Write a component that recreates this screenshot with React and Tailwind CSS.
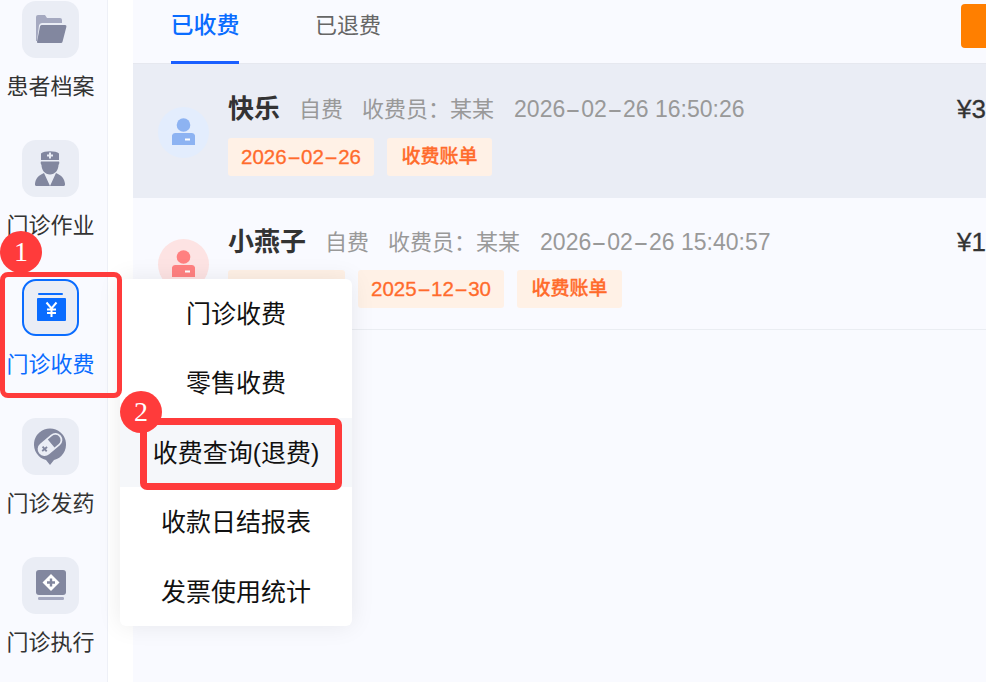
const Box = ({ active, children }) => (
  <div className={active ? "w-[57px] h-[57px] rounded-[14px] bg-[#eaedf5] border-2 border-[#0a6cff] flex items-center justify-center" : "w-[57px] h-[57px] rounded-[14px] bg-[#eaedf5] flex items-center justify-center"}>
    {children}
  </div>
);

const FolderIcon = () => (
  <svg width="57" height="57" viewBox="0 0 57 57">
    <path d="M14 16a2 2 0 0 1 2-2h7l2 3h13a2 2 0 0 1 2 2v3H20a3 3 0 0 0-3 2.500L15 40h-1z" fill="#a5a9c0" />
    <path d="M20 24h23a1.400 1.400 0 0 1 1.400 1.700L40.600 40.500a1.800 1.800 0 0 1-1.800 1.500H16a1 1 0 0 1-1-1.200l3-15.300a1.800 1.800 0 0 1 2-1.500z" fill="#82879f" />
  </svg>
);

const NurseIcon = () => (
  <svg width="57" height="57" viewBox="0 0 57 57">
    <path d="M19 13.500c3-3 15-3 18 0v6.500H19z" fill="#82879f" />
    <path d="M27 12.500h2v2h2v2h-2v2h-2v-2h-2v-2h2z" fill="#eaedf5" />
    <path d="M19 21.500h18c.5 1 .5 2-.5 3.500 0 5-3.500 9.500-8.500 9.500s-8.500-4.500-8.500-9.500c-1-1.500-1-2.500-.5-3.500z" fill="#82879f" />
    <path d="M22 33l6 13H15a2 2 0 0 1-2-2.300c.5-5 3.500-8.500 9-10.700z" fill="#82879f" />
    <path d="M34 33l-6 13h13a2 2 0 0 0 2-2.300c-.5-5-3.500-8.500-9-10.700z" fill="#82879f" />
  </svg>
);

const YenIcon = () => (
  <svg width="53" height="53" viewBox="0 0 53 53">
    <rect x="14" y="12" width="25" height="2" rx="1" fill="#0a6cff" />
    <rect x="13" y="17" width="29" height="23" rx="1" fill="#0a6cff" />
    <path d="M22.500 21.500l5 6 5-6M27.500 27.500v8.500M23 28.500h9M23 32h9" stroke="#fff" strokeWidth="2" fill="none" />
  </svg>
);

const PillIcon = () => (
  <svg width="57" height="57" viewBox="0 0 57 57">
    <path d="M28 10.500a16 16 0 0 1 4 31.500l-4 5-4-5a16 16 0 0 1 4-31.500z" fill="#82879f" />
    <g transform="rotate(-40 28 26.500)">
      <rect x="14" y="19.500" width="28" height="14" rx="7" fill="#eaedf5" />
      <path d="M29.500 21.300h5.500a5.200 5.200 0 0 1 0 10.400h-5.500z" fill="#82879f" />
      <path d="M21 23.300v6.400M17.800 26.500h6.400" stroke="#82879f" strokeWidth="1.800" />
    </g>
  </svg>
);

const ExecIcon = () => (
  <svg width="57" height="57" viewBox="0 0 57 57">
    <rect x="14" y="13" width="30" height="25" rx="3" fill="#82879f" />
    <rect x="16" y="40" width="26" height="3" rx="1.200" fill="#a5a9c0" />
    <path d="M29 17l8.500 8.500L29 34l-8.500-8.500z" fill="#fff" />
    <path d="M27.800 21.500h2.400v2.800H33v2.400h-2.800v2.800h-2.400v-2.800H25v-2.400h2.800z" fill="#82879f" />
  </svg>
);

const NavItem = ({ label, active, children }) => (
  <div className="h-[139px] flex flex-col items-center shrink-0">
    <Box active={active}>{children}</Box>
    <div className={active ? "mt-[12px] text-[22px] leading-[33px] text-[#0a6cff]" : "mt-[12px] text-[22px] leading-[33px] text-[#333333]"}>{label}</div>
  </div>
);

const Person = ({ bg, fg }) => (
  <div className={`w-[51px] h-[51px] rounded-full flex items-center justify-center shrink-0 ${bg}`}>
    <svg width="51" height="51" viewBox="0 0 51 51">
      <circle cx="25.500" cy="18" r="6.800" fill={fg} />
      <path d="M14 28.500a3 3 0 0 1 3-2.500h17a3 3 0 0 1 3 2.500V38H14z" fill={fg} />
      <rect x="27" y="31.500" width="5" height="2" fill="#fff" />
    </svg>
  </div>
);

// The reference's font has a long hyphen; stretch it so the dates keep their width.
const DateText = ({ value }) =>
  value.split("-").map((part, i) => (
    <span key={i}>
      {i > 0 && <span className="inline-block w-[0.7em] text-center scale-x-[2]">-</span>}
      {part}
    </span>
  ));

const Tag = ({ children, className = "" }) => (
  <div className={`h-[38px] flex items-center justify-center rounded-[3px] bg-[#fff1e6] text-[#ff6b2c] font-medium [-webkit-text-stroke:0.3px_#ff6b2c] whitespace-nowrap ${className}`}>{children}</div>
);

const Row = ({ active, name, time, amount, avatar, tags }) => (
  <div className={active ? "h-[134px] bg-[#eaedf5] flex shrink-0 relative" : "h-[132px] flex shrink-0 relative border-b border-[#eaedf2]"}>
    <div className={active ? "ml-[25px] mt-[43px]" : "ml-[25px] mt-[41px]"}>{avatar}</div>
    <div className={active ? "ml-[19px] pt-[27px] flex-1 min-w-0" : "ml-[19px] pt-[26px] flex-1 min-w-0"}>
      <div className="flex items-center h-[36px] whitespace-nowrap">
        <span className="text-[26px] font-bold text-[#333333] mr-[19px]">{name}</span>
        <span className="text-[22px] text-[#999999] mr-[19px]">自费</span>
        <span className="text-[22px] text-[#999999] mr-[20px]">收费员：某某</span>
        <span className="text-[23px] text-[#999999]"><DateText value={time} /></span>
      </div>
      <div className={active ? "flex gap-[13px] mt-[11px]" : "flex gap-[13px] mt-[10px]"}>{tags}</div>
    </div>
    <div className={active ? "absolute left-[824px] top-[27px] h-[36px] flex items-center text-[26px] font-medium text-[#333333] whitespace-nowrap [-webkit-text-stroke:0.3px_#333333]" : "absolute left-[824px] top-[26px] h-[36px] flex items-center text-[26px] font-medium text-[#333333] whitespace-nowrap [-webkit-text-stroke:0.3px_#333333]"}>{amount}</div>
  </div>
);

const menu = ["门诊收费", "零售收费", "收费查询(退费)", "收款日结报表", "发票使用统计"];

export default function App() {
  return (
    <div className="relative w-[986px] h-[682px] overflow-hidden bg-white flex font-['Liberation_Sans','Noto_Sans_CJK_SC',sans-serif]">
      <aside className="w-[108px] h-full shrink-0 bg-[#f9faff] border-r border-[#eef0f7] pt-[1px] pr-[6px] flex flex-col">
        <NavItem label="患者档案"><FolderIcon /></NavItem>
        <NavItem label="门诊作业"><NurseIcon /></NavItem>
        <NavItem label="门诊收费" active><YenIcon /></NavItem>
        <NavItem label="门诊发药"><PillIcon /></NavItem>
        <NavItem label="门诊执行"><ExecIcon /></NavItem>
      </aside>
      <main className="ml-[25px] flex-1 min-w-0 bg-[#f9faff] flex flex-col">
        <header className="h-[64px] shrink-0 border-b border-[#e6e8ef] flex relative">
          <div className="ml-[38px] w-[68px] h-[64px] flex justify-center whitespace-nowrap text-[23px] font-medium leading-[51px] text-[#0a6cff] border-b-[3px] border-[#1a5fff]">已收费</div>
          <div className="ml-[76px] text-[22px] leading-[51px] text-[#666666]">已退费</div>
          <div className="ml-auto mt-[4px] w-[25px] h-[44px] bg-[#ff7f00] rounded-l-[4px]"></div>
        </header>
        <Row
          active
          name="快乐"
          time="2026-02-26 16:50:26"
          amount="¥3"
          avatar={<Person bg="bg-[#e3edfd]" fg="#8db3f2" />}
          tags={<>
            <Tag className="w-[146px] text-[20.500px]"><DateText value="2026-02-26" /></Tag>
            <Tag className="w-[105px] text-[19px]">收费账单</Tag>
          </>}
        />
        <Row
          name="小燕子"
          time="2026-02-26 15:40:57"
          amount="¥1"
          avatar={<Person bg="bg-[#fde3e3]" fg="#ff8080" />}
          tags={<>
            <Tag className="w-[117px]"></Tag>
            <Tag className="w-[146px] text-[20.500px]"><DateText value="2025-12-30" /></Tag>
            <Tag className="w-[105px] text-[19px]">收费账单</Tag>
          </>}
        />
      </main>

      <div className="absolute left-[120px] top-[279px] w-[232px] h-[347px] bg-white rounded-[6px] shadow-[0_0_24px_rgba(0,0,0,0.08)] flex flex-col">
        {menu.map((m, i) => (
          <div key={m} className={i === 2 ? "h-[69.400px] pt-[2px] flex items-center justify-center text-[25px] text-[#111111] bg-[#f5f7fa]" : "h-[69.400px] pt-[2px] flex items-center justify-center text-[25px] text-[#111111]"}>{m}</div>
        ))}
      </div>

      <div className="absolute left-0 top-[272px] w-[122px] h-[126px] border-[5px] border-[#ff3b3b] rounded-[8px]"></div>
      <div className="absolute left-[140px] top-[418px] w-[202px] h-[72px] border-[7px] border-[#ff3b3b] rounded-[7px]"></div>
      <div className="absolute left-0 top-[231px] w-[42px] h-[42px] rounded-full bg-[#ff3b3b] text-white flex items-center justify-center text-[28px] font-['Liberation_Serif',serif]">1</div>
      <div className="absolute left-[120px] top-[391px] w-[42px] h-[42px] rounded-full bg-[#ff3b3b] text-white flex items-center justify-center text-[28px] font-['Liberation_Serif',serif]">2</div>
    </div>
  );
}
